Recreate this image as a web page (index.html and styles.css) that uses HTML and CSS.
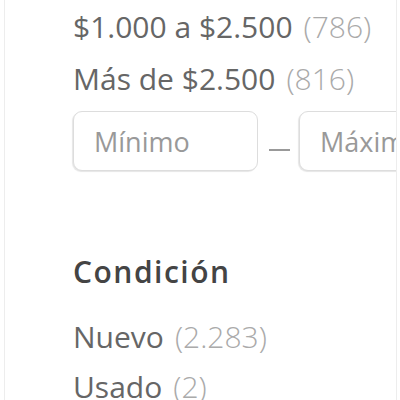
FILE: index.html
```html
<!DOCTYPE html>
<html lang="es">
<head>
  <meta charset="UTF-8" />
  <title>Filtros</title>
  <link rel="stylesheet" href="styles.css">
</head>
<body>

<aside class="filters">
  <ul class="filter-list">
    <li><a href="#">$1.000 a $2.500</a><span class="qty">(786)</span></li>
    <li><a href="#">Más de $2.500</a><span class="qty">(816)</span></li>
  </ul>

  <!-- rango de precio -->
  <form class="price-range">
    <input type="text" placeholder="Mínimo">
    <span class="sep"></span>
    <input type="text" placeholder="Máximo">
  </form>

  <h3 class="filter-title">Condición</h3>
  <ul class="filter-list filter-list--tight">
    <li><a href="#">Nuevo</a><span class="qty">(2.283)</span></li>
    <li><a href="#">Usado</a><span class="qty">(2)</span></li>
  </ul>
</aside>

</body>
</html>
```

FILE: styles.css
```css
body {
  margin: 0;
  background: #fff;
  font-family: 'Open Sans', 'Liberation Sans', sans-serif;
  overflow: hidden;
}

.filters {
  width: 393px;
  height: 400px;
  margin-left: 4px;
  padding: 1px 0 0 68px;
  box-sizing: border-box;
  border-left: 1px solid #ededed;
  border-right: 1px solid #ededed;
  overflow: hidden;
}

.filter-list {
  list-style: none;
  margin: 0;
  padding: 0;
}

.filter-list li {
  font-size: 30px;
  line-height: 52px;
  white-space: nowrap;
}

.filter-list--tight li {
  line-height: 50px;
}

.filter-list a {
  color: #666;
  text-decoration: none;
}

.qty {
  margin-left: 11px;
  color: #aaa;
  font-weight: 300;
}

.price-range {
  display: flex;
  align-items: center;
  gap: 9px;
  margin-top: 6px;
  width: 420px;
}

.price-range input {
  flex: none;
  width: 185px;
  height: 60px;
  padding: 0 20px;
  box-sizing: border-box;
  border: 1px solid #ddd;
  border-radius: 9px;
  box-shadow: -1px 1px 1px rgba(0,0,0,0.1);
  font-family: inherit;
  font-size: 27px;
  color: #666;
}

.price-range input::placeholder {
  color: #999;
}

.sep {
  width: 21px;
  height: 2px;
  margin: 18px 0 0 2px;
  background: #999;
}

.filter-title {
  margin: 81px 0 20px;
  font-size: 30px;
  line-height: 40px;
  font-weight: 600;
  letter-spacing: 1.5px;
  color: #444;
}
```
